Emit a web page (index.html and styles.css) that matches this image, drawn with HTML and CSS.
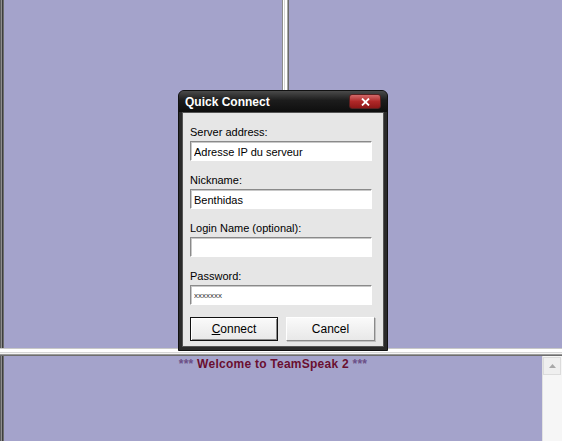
FILE: index.html
```html
<!DOCTYPE html>
<html lang="fr">
<head>
  <meta charset="UTF-8">
  <title>TeamSpeak 2 - Quick Connect</title>
  <link rel="stylesheet" href="styles.css">
</head>
<body>
  <div class="app">
    <div class="top">
      <div class="edge"></div>
      <div class="pane left-pane"></div>
      <div class="vsplit"></div>
      <div class="pane right-pane"></div>
    </div>
    <div class="hsplit"></div>
    <div class="bottom">
      <div class="edge"></div>
      <div class="chat">
        <p class="welcome"><span class="stars">***</span> Welcome to TeamSpeak 2 <span class="stars">***</span></p>
      </div>
      <div class="scrollbar">
        <div class="scroll-up">
          <svg width="7" height="4" viewBox="0 0 7 4"><path d="M0 4 L3.5 0 L7 4 Z" fill="#a8a8a8"/></svg>
        </div>
      </div>
    </div>
  </div>

  <div class="dialog">
    <div class="titlebar">
      <span class="title">Quick Connect</span>
      <button type="button" class="close">
        <svg width="9" height="8" viewBox="0 0 9 8"><path d="M1 0.5 L8 7.5 M8 0.5 L1 7.5" stroke="#fff" stroke-width="1.8"/></svg>
      </button>
    </div>
    <form class="body">
      <label class="field">
        <span>Server address:</span>
        <input type="text" value="Adresse IP du serveur">
      </label>
      <label class="field">
        <span>Nickname:</span>
        <input type="text" value="Benthidas">
      </label>
      <label class="field">
        <span>Login Name (optional):</span>
        <input type="text" value="">
      </label>
      <label class="field">
        <span>Password:</span>
        <input type="text" class="pw" value="xxxxxxx">
      </label>
      <div class="buttons">
        <button type="button" class="btn default"><u>C</u>onnect</button>
        <button type="button" class="btn">Cancel</button>
      </div>
    </form>
  </div>
</body>
</html>
```

FILE: styles.css
```css
html, body {
  margin: 0;
  height: 100%;
  overflow: hidden;
}
body {
  font-family: 'Liberation Sans', Arial, sans-serif;
  font-size: 11px;
  background: #a4a3cb;
}
.app {
  display: flex;
  flex-direction: column;
  height: 441px;
}
.top {
  display: flex;
  height: 348px;
}
.edge {
  width: 4px;
  flex: none;
  background: linear-gradient(to right, #5c5c5c 0 1px, #8e8e8e 1px 2px, #3e3e3e 2px 3px, #6c6c6c 3px 4px);
}
.pane {
  background: #a4a3cb;
}
.left-pane {
  width: 278px;
}
.right-pane {
  flex: 1;
}
.vsplit {
  width: 7px;
  background: linear-gradient(to right, #8c8c8c 0 1px, #fff 1px 2px, #d4d4d4 2px 3px, #fff 3px 5px, #a6a6a6 5px 6px, #6a6a6a 6px 7px);
}
.hsplit {
  height: 8px;
  background: linear-gradient(to bottom, #c8c8c8 0 1px, #fff 1px 4px, #d6d6d6 4px 5px, #f4f4f4 5px 6px, #9a9a9a 6px 7px, #6e6e6e 7px 8px);
}
.bottom {
  flex: 1;
  display: flex;
}
.chat {
  flex: 1;
  background: #a4a3cb;
}
.welcome {
  margin: 1px 0 0;
  text-align: center;
  font-weight: bold;
  font-size: 12px;
  letter-spacing: 0.25px;
  color: #6a0f30;
}
.stars {
  color: #6b4f86;
}
.scrollbar {
  width: 19px;
  background: #f6f6f6;
  border-left: 1px solid #e2e2e2;
}
.scroll-up {
  height: 16px;
  margin: 1px 1px 0 0;
  background: #efefef;
  border: 1px solid #dcdcdc;
  display: flex;
  align-items: center;
  justify-content: center;
}

/* dialog */
.dialog {
  position: absolute;
  left: 178px;
  top: 90px;
  width: 210px;
  height: 261px;
  box-sizing: border-box;
  background: #2a2a2a;
  border: 1px solid #111;
  border-radius: 6px 6px 0 0;
  padding: 0 3px 3px;
  display: flex;
  flex-direction: column;
}
.titlebar {
  height: 21px;
  display: flex;
  align-items: center;
  justify-content: space-between;
  padding: 0 6px 0 3px;
  background: linear-gradient(to bottom, #4a4a4a, #1c1c1c 45%, #0e0e0e);
  margin: 0 -3px;
  border-radius: 5px 5px 0 0;
}
.title {
  color: #fff;
  font-weight: bold;
  font-size: 12px;
  padding-left: 3px;
}
.close {
  width: 32px;
  height: 15px;
  padding: 0;
  border: 1px solid #5a2020;
  border-radius: 3px;
  background: linear-gradient(to bottom, #d46a6a, #b02828 50%, #8e1818);
  display: flex;
  align-items: center;
  justify-content: center;
}
.body {
  flex: 1;
  margin: 0;
  background: #e6e6e6;
  border: 1px solid #555;
  padding: 12px 11px 0 7px;
  display: flex;
  flex-direction: column;
  gap: 12px;
}
.field {
  display: flex;
  flex-direction: column;
  color: #000;
}
.field span {
  height: 16px;
  line-height: 14px;
}
.field input {
  height: 20px;
  box-sizing: border-box;
  margin: 0;
  padding: 1px 3px 0;
  font-family: 'Liberation Sans', Arial, sans-serif;
  font-size: 11px;
  color: #000;
  background: #fff;
  border: 1px solid #fff;
  border-top-color: #8a8a8a;
  border-left-color: #8a8a8a;
  box-shadow: inset 1px 1px 0 #c8c8c8;
  outline: none;
}
.field input.pw {
  font-size: 8px;
  color: #333;
}
.buttons {
  display: flex;
  justify-content: space-between;
  margin-right: -3px;
}
.btn {
  width: 89px;
  height: 24px;
  padding: 0;
  font-family: 'Liberation Sans', Arial, sans-serif;
  font-size: 12px;
  color: #000;
  background: linear-gradient(to bottom, #fafafa, #e8e8e8);
  border: 1px solid #fff;
  border-right-color: #8a8a8a;
  border-bottom-color: #8a8a8a;
  box-shadow: 1px 1px 0 #c0c0c0;
}
.btn.default {
  width: 88px;
  border: 1px solid #111;
  box-shadow: inset 1px 1px 0 #fff, inset -1px -1px 0 #8a8a8a;
}
```
